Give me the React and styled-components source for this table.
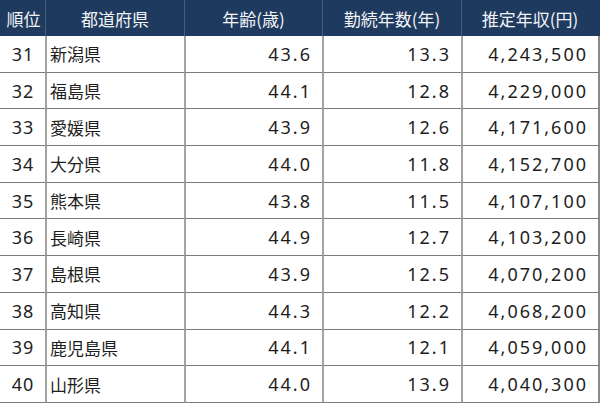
import React from "react";
import styled, { createGlobalStyle, css } from "styled-components";

const GlobalStyle = createGlobalStyle`
  html, body {
    margin: 0;
    padding: 0;
    background: #ffffff;
  }
  body {
    font-family: "Noto Sans", "Noto Sans CJK JP", sans-serif;
  }
`;

const Grid = styled.div`
  display: grid;
  grid-template-columns: 45px 139px 138px 139px 139px;
  grid-template-rows: 36px repeat(10, 36.7px);
  width: 600px;
  height: 403px;
  box-sizing: border-box;
`;

const HeadCell = styled.div`
  display: flex;
  align-items: center;
  justify-content: center;
  background: #1f3a5f;
  color: #f2f4f7;
  font-family: "Noto Sans CJK JP", sans-serif;
  font-size: 17px;
  box-sizing: border-box;
  ${(props) =>
    props.$first
      ? css`
          padding-left: 2px;
        `
      : css`
          border-left: 1px solid rgba(255, 255, 255, 0.18);
        `};
  ${(props) =>
    props.$last &&
    css`
      border-right: 2px solid #1f3a5f;
    `};
`;

const Cell = styled.div`
  display: flex;
  align-items: center;
  box-sizing: border-box;
  color: #1e1e1e;
  font-size: 18px;
  border-bottom: 1px solid #7a7a7a;
  ${(props) =>
    !props.$first &&
    css`
      border-left: 2px solid #a3a3a3;
    `};
  ${(props) =>
    props.$last &&
    css`
      border-right: 2px solid #8a8a8a;
    `};
  ${(props) =>
    props.$align === "center" &&
    css`
      justify-content: center;
      letter-spacing: 1px;
      padding-left: 1px;
    `};
  ${(props) =>
    props.$align === "left" &&
    css`
      justify-content: flex-start;
      padding-left: 3px;
      font-size: 17px;
      font-family: "Noto Sans CJK JP", sans-serif;
    `};
  ${(props) =>
    props.$align === "right" &&
    css`
      justify-content: flex-end;
      padding-right: 10px;
      letter-spacing: 2px;
    `};
`;

const headers = ["順位", "都道府県", "年齢(歳)", "勤続年数(年)", "推定年収(円)"];

const rows = [
  [31, "新潟県", "43.6", "13.3", "4,243,500"],
  [32, "福島県", "44.1", "12.8", "4,229,000"],
  [33, "愛媛県", "43.9", "12.6", "4,171,600"],
  [34, "大分県", "44.0", "11.8", "4,152,700"],
  [35, "熊本県", "43.8", "11.5", "4,107,100"],
  [36, "長崎県", "44.9", "12.7", "4,103,200"],
  [37, "島根県", "43.9", "12.5", "4,070,200"],
  [38, "高知県", "44.3", "12.2", "4,068,200"],
  [39, "鹿児島県", "44.1", "12.1", "4,059,000"],
  [40, "山形県", "44.0", "13.9", "4,040,300"],
];

const aligns = ["center", "left", "right", "right", "right"];

const App = () => {
  return (
    <>
      <GlobalStyle />
      <Grid>
        {headers.map((h, i) => (
          <HeadCell key={h} $first={i === 0} $last={i === headers.length - 1}>
            {h}
          </HeadCell>
        ))}
        {rows.map((row) =>
          row.map((value, i) => (
            <Cell
              key={`${row[0]}-${i}`}
              $align={aligns[i]}
              $first={i === 0}
              $last={i === row.length - 1}
            >
              {value}
            </Cell>
          ))
        )}
      </Grid>
    </>
  );
};

export default App;
